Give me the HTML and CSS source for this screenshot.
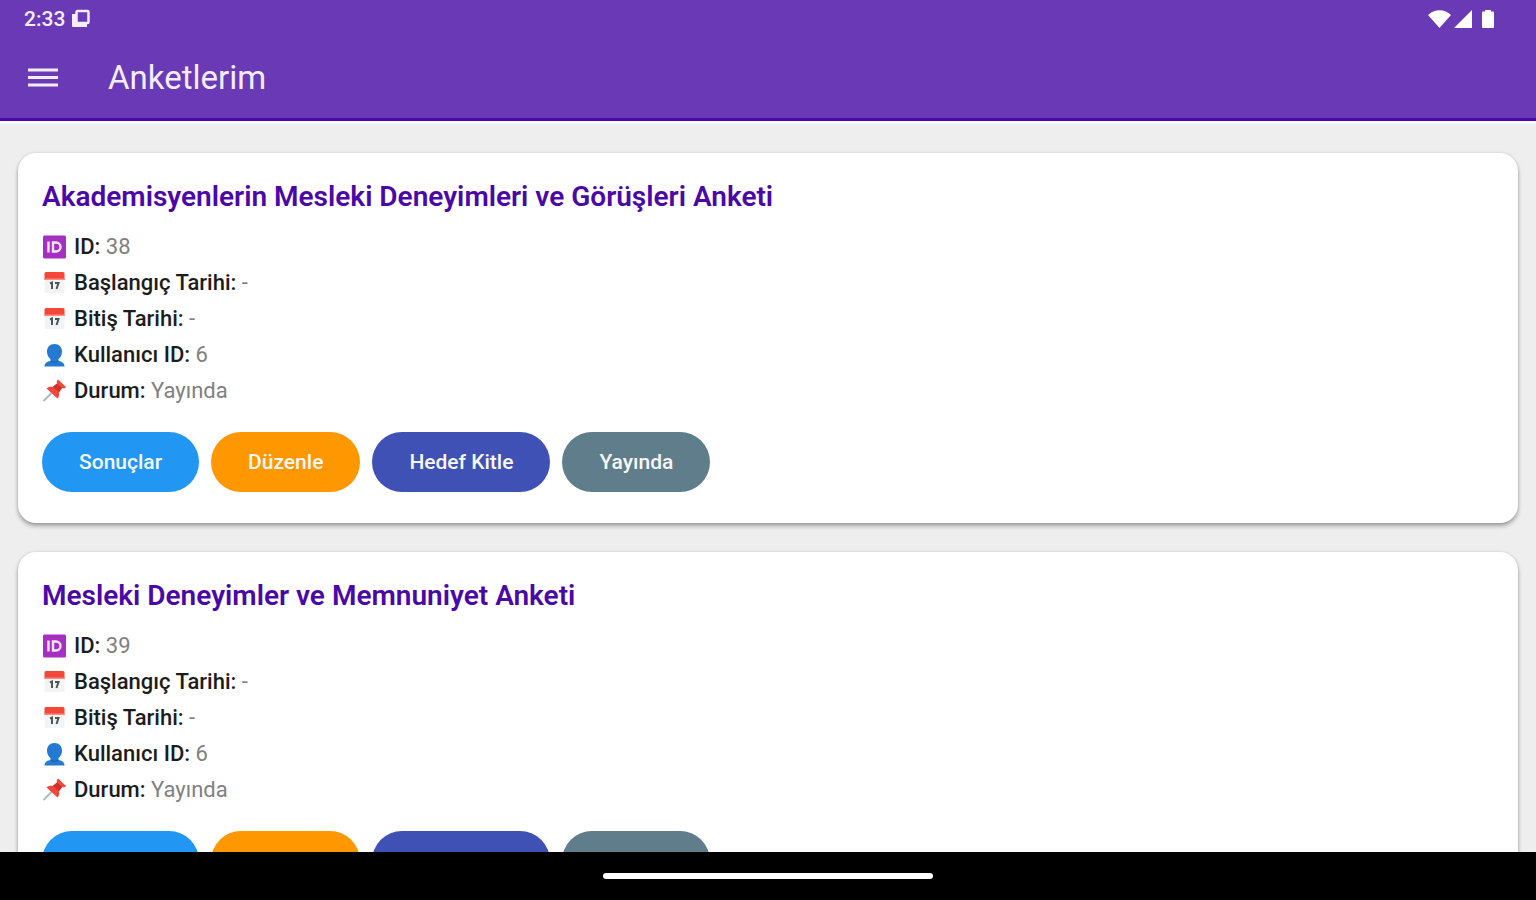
FILE: index.html
```html
<!DOCTYPE html>
<html lang="tr">
<head>
    <meta charset="UTF-8">
    <meta name="viewport" content="width=device-width, initial-scale=1.0">
    <title>Anketlerim</title>
    <link rel="stylesheet" href="styles.css">
</head>
<body>
    <!-- Shared icons -->
    <svg class="sprite" xmlns="http://www.w3.org/2000/svg">
        <symbol id="icon-id" viewBox="0 0 24 24">
            <rect x="0.5" y="0.5" width="23" height="23" rx="1.5" fill="#a52fc0"/>
            <path d="M6 6.500v11M10.500 7.500v9h3a4.500 4.500 0 0 0 0-9z" fill="none" stroke="#f8e6fc" stroke-width="2.4"/>
        </symbol>
        <symbol id="icon-calendar" viewBox="0 0 24 24">
            <path d="M2 8h20v12.500a1.500 1.500 0 0 1-1.500 1.500h-17A1.500 1.500 0 0 1 2 20.500z" fill="#f3f3f3"/>
            <path d="M3.500 1h17A1.500 1.500 0 0 1 22 2.500V9H2V2.500A1.500 1.500 0 0 1 3.500 1z" fill="#f4473a"/>
            <path d="M2 7.500h20V9H2z" fill="#fa8b80"/>
            <path d="M7.500 12.500l2-1V18M12.500 12H16l-2 6" fill="none" stroke="#4c5558" stroke-width="2"/>
        </symbol>
        <symbol id="icon-user" viewBox="0 0 24 24">
            <path d="M12 1c4.500 0 7.500 3 7.500 7.500 0 3.500-1.500 6-3.500 7.500v2c3.500.6 6 2 6 5.500H2c0-3.500 2.500-4.900 6-5.500v-2c-2-1.500-3.500-4-3.500-7.500C4.500 4 7.500 1 12 1z" fill="#2479d3"/>
            <path d="M8 17.500c2 1.500 6 1.500 8 0v1c-2 1.500-6 1.500-8 0z" fill="#155da8"/>
        </symbol>
        <symbol id="icon-pin" viewBox="0 0 24 24">
            <path d="M9 14L1 22" stroke="#a9bac3" stroke-width="2"/>
            <path d="M15.500.5l8 7.500c-1 1.500-2.500 1.500-4 1l-3 4.500c.5 2.500 0 4.500-1.500 6L4 9.500c1.500-1.500 4-2 6-1.500l4.500-3.500c-.5-1.500-.3-3 1-4z" fill="#f2473a"/>
            <path d="M14.500 4.500l5 4.500-3 4-6-5z" fill="#cf3228"/>
        </symbol>
    </svg>

    <header class="app-header">
        <div class="status-bar">
            <span class="status-left">
                <span>2:33</span>
                <svg class="status-icon" viewBox="0 0 20 20">
                    <rect x="5.500" y="2" width="12" height="12" rx="1" fill="none" stroke="currentColor" stroke-width="2.500"/>
                    <path d="M1 5h4v10h11v3H2a1 1 0 0 1-1-1z" fill="currentColor"/>
                </svg>
            </span>
            <svg class="status-signals" viewBox="0 0 68 20" fill="currentColor">
                <path d="M0 6C6-.5 17-.5 23 6L11.500 19z"/>
                <path d="M44 1v18H26z"/>
                <path d="M55 2.500h2V1h6v1.500h2a1 1 0 0 1 1 1V18a1 1 0 0 1-1 1H55a1 1 0 0 1-1-1V3.500a1 1 0 0 1 1-1z"/>
            </svg>
        </div>
        <div class="toolbar">
            <button class="menu-button" type="button" aria-label="Menü">
                <svg viewBox="0 0 30 19" stroke="currentColor" stroke-width="3">
                    <path d="M0 2h30M0 9.500h30M0 17h30"/>
                </svg>
            </button>
            <h1 class="toolbar-title">Anketlerim</h1>
        </div>
    </header>

    <main class="survey-list">
        <article class="card">
            <h2 class="card-title">Akademisyenlerin Mesleki Deneyimleri ve Görüşleri Anketi</h2>
            <ul class="details">
                <li><svg class="icon"><use href="#icon-id"/></svg><span><b>ID:</b> 38</span></li>
                <li><svg class="icon"><use href="#icon-calendar"/></svg><span><b>Başlangıç Tarihi:</b> -</span></li>
                <li><svg class="icon"><use href="#icon-calendar"/></svg><span><b>Bitiş Tarihi:</b> -</span></li>
                <li><svg class="icon"><use href="#icon-user"/></svg><span><b>Kullanıcı ID:</b> 6</span></li>
                <li><svg class="icon"><use href="#icon-pin"/></svg><span><b>Durum:</b> Yayında</span></li>
            </ul>
            <div class="actions">
                <button class="button button-results" type="button">Sonuçlar</button>
                <button class="button button-edit" type="button">Düzenle</button>
                <button class="button button-audience" type="button">Hedef Kitle</button>
                <button class="button button-status" type="button">Yayında</button>
            </div>
        </article>

        <article class="card">
            <h2 class="card-title">Mesleki Deneyimler ve Memnuniyet Anketi</h2>
            <ul class="details">
                <li><svg class="icon"><use href="#icon-id"/></svg><span><b>ID:</b> 39</span></li>
                <li><svg class="icon"><use href="#icon-calendar"/></svg><span><b>Başlangıç Tarihi:</b> -</span></li>
                <li><svg class="icon"><use href="#icon-calendar"/></svg><span><b>Bitiş Tarihi:</b> -</span></li>
                <li><svg class="icon"><use href="#icon-user"/></svg><span><b>Kullanıcı ID:</b> 6</span></li>
                <li><svg class="icon"><use href="#icon-pin"/></svg><span><b>Durum:</b> Yayında</span></li>
            </ul>
            <div class="actions">
                <button class="button button-results" type="button">Sonuçlar</button>
                <button class="button button-edit" type="button">Düzenle</button>
                <button class="button button-audience" type="button">Hedef Kitle</button>
                <button class="button button-status" type="button">Yayında</button>
            </div>
        </article>
    </main>

    <footer class="nav-bar">
        <div class="nav-handle"></div>
    </footer>
</body>
</html>
```
FILE: styles.css
```css
:root {
    --primary: #6939b6;
    --primary-dark: #4a08a8;
    --background: #eeeeee;
    --surface: #ffffff;
    --text: #1c1c1c;
    --text-muted: #808080;
}

* {
    box-sizing: border-box;
}

body {
    display: flex;
    flex-direction: column;
    height: 100vh;
    margin: 0;
    overflow: hidden;
    font-family: Roboto, "Noto Sans", sans-serif;
    background-color: var(--background);
    color: var(--text);
}

.sprite {
    position: absolute;
    width: 0;
    height: 0;
}

.app-header {
    flex: none;
    background-color: var(--primary);
    border-bottom: 3px solid var(--primary-dark);
    box-shadow: 0 3px 0 #fafafa;
    color: #f3edfb;
}

.status-bar {
    display: flex;
    align-items: center;
    justify-content: space-between;
    height: 37px;
    padding: 0 40px 0 24px;
    font-size: 21px;
    font-weight: 500;
}

.status-left {
    display: flex;
    align-items: center;
    gap: 6px;
}

.status-icon {
    width: 20px;
    height: 20px;
}

.status-signals {
    width: 68px;
    height: 20px;
    color: #ffffff;
}

.toolbar {
    display: flex;
    align-items: center;
    gap: 50px;
    height: 81px;
    padding: 0 28px;
}

.menu-button {
    display: flex;
    width: 30px;
    padding: 0;
    border: 0;
    background: none;
    color: inherit;
    cursor: pointer;
}

.menu-button svg {
    width: 30px;
    height: 19px;
}

.toolbar-title {
    margin: 0;
    font-size: 33px;
    font-weight: 400;
}

.survey-list {
    display: flex;
    flex: 1;
    flex-direction: column;
    gap: 29px;
    min-height: 0;
    padding: 32px 18px 0;
    overflow: hidden;
}

.card {
    flex: none;
    padding: 26px 24px 31px;
    border-radius: 18px;
    background-color: var(--surface);
    box-shadow: 0 3px 4px rgba(0, 0, 0, 0.32), 0 0 3px rgba(0, 0, 0, 0.12);
}

.card-title {
    margin: 0 0 14px;
    font-size: 28px;
    font-weight: 600;
    line-height: 36px;
    color: var(--primary-dark);
}

.details {
    margin: 0 0 23px;
    padding: 0;
    list-style: none;
    font-size: 22px;
    line-height: 36px;
    color: var(--text-muted);
}

.details li {
    display: flex;
    align-items: center;
    gap: 7px;
}

.details b {
    font-weight: 500;
    color: var(--text);
}

.icon {
    width: 25px;
    height: 24px;
}

.actions {
    display: flex;
    gap: 12px;
}

.button {
    height: 60px;
    padding: 0 37px;
    border: 0;
    border-radius: 30px;
    font-family: inherit;
    font-size: 21px;
    font-weight: 500;
    color: #f7f7f7;
    cursor: pointer;
}

.button-results {
    background-color: #2196f3;
}

.button-edit {
    background-color: #ff9800;
}

.button-audience {
    background-color: #3f51b5;
}

.button-status {
    background-color: #607d8b;
}

.nav-bar {
    display: flex;
    flex: none;
    align-items: center;
    justify-content: center;
    height: 48px;
    background-color: #000000;
}

.nav-handle {
    width: 330px;
    height: 6px;
    border-radius: 3px;
    background-color: #ffffff;
}
```
